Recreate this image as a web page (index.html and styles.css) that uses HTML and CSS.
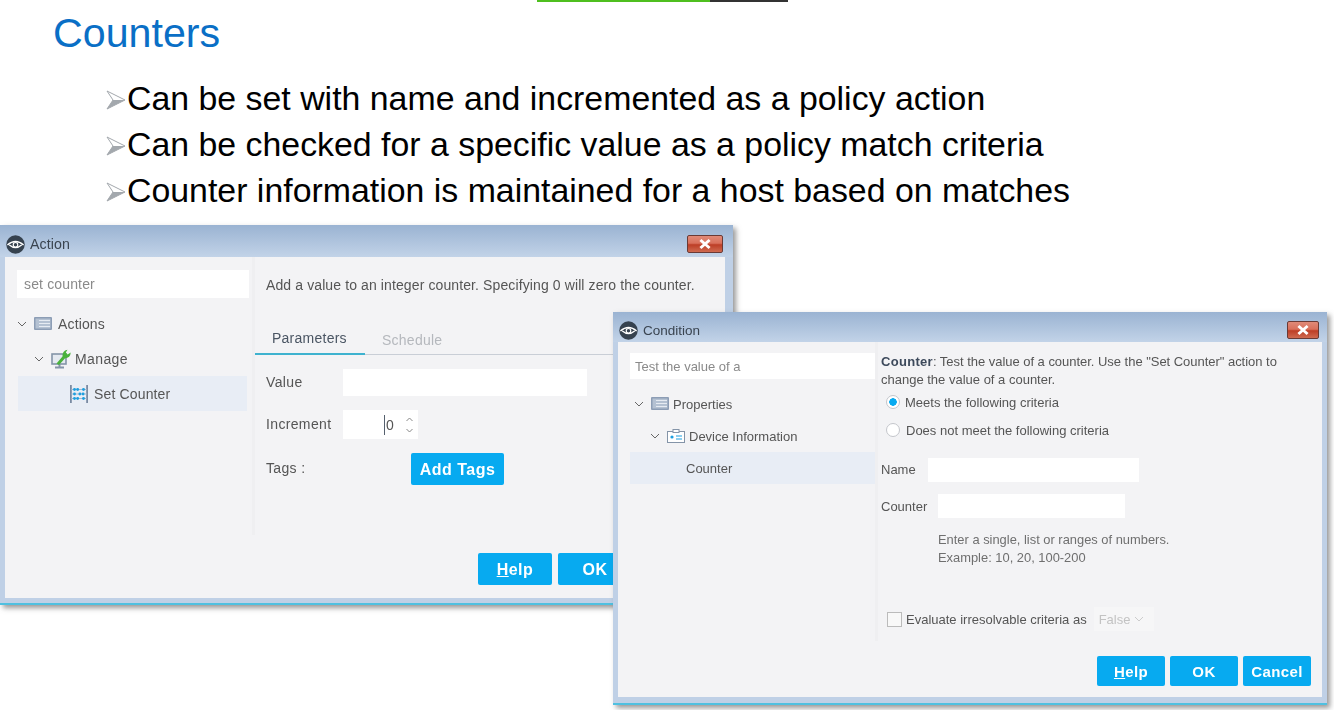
FILE: index.html
```html
<!DOCTYPE html>
<html lang="en">
<head>
<meta charset="utf-8">
<title>Counters</title>
<link rel="stylesheet" href="styles.css">
</head>
<body>
<div class="slide">
  <div class="topbar"><span class="topbar-green"></span><span class="topbar-dark"></span></div>
  <h1 class="title">Counters</h1>
  <ul class="bullets">
    <li class="bullet"><svg class="arrow" viewBox="0 0 20 20"><path d="M1 1 L19 10 L1 19 L7 10 Z" fill="#fff" stroke="#a3a8ad" stroke-width="1"/><path d="M7 10 L19 10 L1 19 Z" fill="#a3a8ad"/></svg><span>Can be set with name and incremented as a policy action</span></li>
    <li class="bullet"><svg class="arrow" viewBox="0 0 20 20"><path d="M1 1 L19 10 L1 19 L7 10 Z" fill="#fff" stroke="#a3a8ad" stroke-width="1"/><path d="M7 10 L19 10 L1 19 Z" fill="#a3a8ad"/></svg><span>Can be checked for a specific value as a policy match criteria</span></li>
    <li class="bullet"><svg class="arrow" viewBox="0 0 20 20"><path d="M1 1 L19 10 L1 19 L7 10 Z" fill="#fff" stroke="#a3a8ad" stroke-width="1"/><path d="M7 10 L19 10 L1 19 Z" fill="#a3a8ad"/></svg><span>Counter information is maintained for a host based on matches</span></li>
  </ul>

  <section class="window window-action">
    <header class="titlebar">
      <svg class="eye" viewBox="0 0 20 20"><circle cx="10" cy="10" r="9.7" fill="#36424f"/><path d="M1.5 10.5 Q10 3 18.5 10.5" fill="none" stroke="#fff" stroke-width="1.5"/><path d="M3.5 10.5 Q10 16 16.5 10.5" fill="none" stroke="#fff" stroke-width="1.3"/><circle cx="10" cy="10.3" r="2.4" fill="#36424f" stroke="#fff" stroke-width="1.2"/></svg>
      <span class="win-title">Action</span>
      <span class="close"><svg viewBox="0 0 14 10"><path d="M3 1.5 L11 8.5 M11 1.5 L3 8.5" stroke="#fff" stroke-width="2.6"/></svg></span>
    </header>
    <div class="body body-action">
      <div class="side">
        <div class="search">set counter</div>
        <div class="tree-row lvl0 first">
          <svg class="chev" viewBox="0 0 10 6"><path d="M1 1 L5 5 L9 1" fill="none" stroke="#666" stroke-width="1"/></svg>
          <svg class="ico" viewBox="0 0 18 14"><rect width="18" height="13" rx="1" fill="#8c9db5"/><rect x="1.5" y="1.5" width="15" height="10" fill="#b4c1d2"/><path d="M5 3.5H16M5 6.5H16M5 9.5H16" stroke="#e6ebf2" stroke-width="1"/></svg>
          <span>Actions</span>
        </div>
        <div class="tree-row lvl1">
          <svg class="chev" viewBox="0 0 10 6"><path d="M1 1 L5 5 L9 1" fill="none" stroke="#666" stroke-width="1"/></svg>
          <svg class="ico" viewBox="0 0 20 20"><rect x="1" y="5" width="14" height="10" fill="#e4e9f0" stroke="#8494a8" stroke-width="1.6"/><path d="M4 18.5H13M8.5 15V18" stroke="#8494a8" stroke-width="2"/><path d="M5.5 14.5 L11.5 7.5 Q11 2 16.5 0.8 L14.8 3.6 L16.6 5.6 L19.7 3.6 Q19.5 9 13.8 9.4 L8 16 Z" fill="#49b23c"/></svg>
          <span>Manage</span>
        </div>
        <div class="tree-row lvl2 selected">
          <svg class="ico" viewBox="0 0 20 20"><path d="M1 0V20M19 0V20" stroke="#7a8ba3" stroke-width="2"/><path d="M1 5H19M1 10H19M1 15H19" stroke="#9db0c8" stroke-width="1"/><g fill="#1d9fe0"><circle cx="5" cy="5" r="1.6"/><circle cx="8.5" cy="5" r="1.6"/><circle cx="15" cy="5" r="1.6"/><circle cx="11" cy="10" r="1.6"/><circle cx="14.5" cy="10" r="1.6"/><circle cx="5" cy="10" r="1.6"/><circle cx="5" cy="15" r="1.6"/><circle cx="8.5" cy="15" r="1.6"/><circle cx="15" cy="15" r="1.6"/></g></svg>
          <span>Set Counter</span>
        </div>
      </div>
      <div class="main">
        <p class="desc">Add a value to an integer counter. Specifying 0 will zero the counter.</p>
        <div class="tabs">
          <span class="tab tab-on">Parameters</span>
          <span class="tab tab-off">Schedule</span>
        </div>
        <div class="form">
          <label class="lbl">Value</label>
          <div class="input input-value"></div>
          <label class="lbl">Increment</label>
          <div class="input input-spin"><span class="spin-val">0</span><span class="spin"><svg viewBox="0 0 8 20"><path d="M1 6 L4 3 L7 6 M1 14 L4 17 L7 14" fill="none" stroke="#888" stroke-width="1"/></svg></span></div>
          <label class="lbl">Tags :</label>
          <div class="tag-cell"><button class="btn btn-tags">Add Tags</button></div>
        </div>
        <div class="actions actions-a">
          <button class="btn btn-foot"><u>H</u>elp</button>
          <button class="btn btn-foot">OK</button>
        </div>
      </div>
    </div>
  </section>

  <section class="window window-cond">
    <header class="titlebar">
      <svg class="eye" viewBox="0 0 20 20"><circle cx="10" cy="10" r="9.7" fill="#36424f"/><path d="M1.5 10.5 Q10 3 18.5 10.5" fill="none" stroke="#fff" stroke-width="1.5"/><path d="M3.5 10.5 Q10 16 16.5 10.5" fill="none" stroke="#fff" stroke-width="1.3"/><circle cx="10" cy="10.3" r="2.4" fill="#36424f" stroke="#fff" stroke-width="1.2"/></svg>
      <span class="win-title">Condition</span>
      <span class="close"><svg viewBox="0 0 14 10"><path d="M3 1.5 L11 8.5 M11 1.5 L3 8.5" stroke="#fff" stroke-width="2.6"/></svg></span>
    </header>
    <div class="body body-cond">
      <div class="cond-side">
        <div class="search search-c">Test the value of a</div>
        <div class="ctree-row c0">
          <svg class="chev" viewBox="0 0 10 6"><path d="M1 1 L5 5 L9 1" fill="none" stroke="#666" stroke-width="1"/></svg>
          <svg class="ico ico-c" viewBox="0 0 18 14"><rect width="18" height="13" rx="1" fill="#8c9db5"/><rect x="1.5" y="1.5" width="15" height="10" fill="#b4c1d2"/><path d="M5 3.5H16M5 6.5H16M5 9.5H16" stroke="#e6ebf2" stroke-width="1"/></svg>
          <span>Properties</span>
        </div>
        <div class="ctree-row c1">
          <svg class="chev" viewBox="0 0 10 6"><path d="M1 1 L5 5 L9 1" fill="none" stroke="#666" stroke-width="1"/></svg>
          <svg class="ico ico-c" viewBox="0 0 18 14"><rect x="0.5" y="2.5" width="17" height="11" fill="#fff" stroke="#8494a8"/><rect x="6" y="0.5" width="6" height="3" fill="#fff" stroke="#8494a8"/><circle cx="5" cy="8" r="1.6" fill="#1d9fe0"/><path d="M9 7H15M9 10H15" stroke="#1d9fe0" stroke-width="1.2"/></svg>
          <span>Device Information</span>
        </div>
        <div class="ctree-row c2 selected">Counter</div>
      </div>
      <div class="cond-main">
        <div class="cond-desc">
          <div><b>Counter</b><span>: Test the value of a counter. Use the "Set Counter" action to</span></div>
          <div>change the value of a counter.</div>
        </div>
        <div class="radio-row r1"><span class="radio radio-on"></span><span>Meets the following criteria</span></div>
        <div class="radio-row r2"><span class="radio"></span><span>Does not meet the following criteria</span></div>
        <div class="fld f-name"><label class="lbl">Name</label><div class="input input-name"></div></div>
        <div class="fld f-counter"><label class="lbl">Counter</label><div class="input input-counter"></div></div>
        <div class="hint"><div>Enter a single, list or ranges of numbers.</div><div>Example: 10, 20, 100-200</div></div>
        <div class="eval"><span class="check"></span><span>Evaluate irresolvable criteria as</span><span class="select">False<svg viewBox="0 0 10 6"><path d="M1 1 L5 5 L9 1" fill="none" stroke="#ccc" stroke-width="1"/></svg></span></div>
      </div>
      <div class="actions actions-c">
        <button class="btn btn-c"><u>H</u>elp</button>
        <button class="btn btn-c">OK</button>
        <button class="btn btn-c">Cancel</button>
      </div>
    </div>
  </section>
</div>
</body>
</html>
```
FILE: styles.css
```css
* { box-sizing: border-box; }
html, body { margin: 0; padding: 0; }
body { width: 1334px; height: 710px; overflow: hidden; background: #fff; font-family: "Liberation Sans", Arial, sans-serif; }
.slide { position: relative; width: 1334px; height: 710px; overflow: hidden; }

.topbar { display: flex; width: 251px; height: 2px; margin-left: 537px; }
.topbar-green { width: 173px; background: #4fbf1f; }
.topbar-dark { flex: 1; background: #333; }

.title { margin: 11px 0 0 53px; font-weight: 400; font-size: 41.2px; line-height: 40px; color: #0a6fc6; }
.bullets { list-style: none; margin: 22px 0 0 106px; padding: 0; }
.bullet { display: flex; align-items: center; height: 46px; font-size: 33.87px; color: #000; }
.arrow { width: 20px; height: 20px; margin-right: 1px; margin-top: 4px; flex: none; }

.window { position: absolute; background: #bfd0e6; box-shadow: 3px 3px 5px rgba(70,70,70,.55); border-bottom: 2px solid #4fc0e0; color: #555; font-size: 14px; filter: blur(.3px); }
.window-action { left: 0; top: 225px; width: 733px; height: 380px; padding: 0 8px 5px 5px; letter-spacing: .11px; }
.window-cond { left: 613px; top: 312px; width: 714px; height: 393px; padding: 0 5px 6px 5px; font-size: 13px; }

.titlebar { display: flex; align-items: center; height: 32px; margin: 0 -8px 0 -5px; padding: 6px 10px 0 6px; background: linear-gradient(#9ab3d2, #c2d3e8); color: #3a4450; }
.window-cond .titlebar { height: 30px; margin-right: -5px; padding: 6px 8px 0 6px; }
.eye { width: 19px; height: 19px; flex: none; }
.win-title { margin-left: 5px; font-size: 14.2px; flex: 1; }
.window-cond .win-title { font-size: 13.5px; letter-spacing: 0; }
.close { display: flex; align-items: center; justify-content: center; width: 36px; height: 18px; border: 1px solid #6a3a35; border-radius: 2px; background: linear-gradient(#e08a78 0%, #d9705b 45%, #bd3e26 55%, #cf6a50 100%); }
.window-cond .close { width: 32px; height: 18px; }
.close svg { width: 16px; height: 12px; }

.body { background: #f3f3f5; position: relative; }
.body-action { display: flex; height: 341px; }
.body-cond { display: grid; grid-template-columns: 257px 1fr; grid-template-rows: 1fr auto; height: 355px; }

.side { width: 247px; padding: 13px 0 0 12px; flex: none; letter-spacing: .15px; }
.search { background: #fff; height: 28px; width: 232px; padding-left: 7px; line-height: 28px; color: #8a8a8a; }
.tree-row { display: flex; align-items: center; height: 35px; }
.tree-row.first { margin-top: 8px; }
.lvl0 { padding-left: 0; }
.lvl1 { padding-left: 17px; }
.lvl1 span { letter-spacing: .4px; }
.lvl2 { padding-left: 52px; width: 229px; margin-left: 1px; }
.chev { width: 10px; height: 6px; flex: none; margin-right: 7px; }
.ico { width: 18px; height: 14px; flex: none; margin-right: 6px; }
.lvl1 .ico { width: 20px; height: 20px; margin-right: 4px; }
.lvl2 .ico { width: 18px; height: 18px; margin-right: 6px; }
.selected { background: #e8edf5; }

.main { flex: 1; border-left: 3px solid #efeff1; height: 278px; position: relative; }
.desc { margin: 0; padding: 20px 0 0 11px; line-height: 16px; }
.tabs { display: flex; margin-top: 27px; height: 35px; border-bottom: 1px solid #c9ced6; letter-spacing: .25px; }
.tab { display: block; line-height: 33px; }
.tab-on { width: 110px; padding: 2px 0 0 17px; color: #4a5563; border-bottom: 2px solid #3eb2cf; height: 35px; }
.tab-off { padding: 4px 0 0 17px; color: #b5b8bd; }
.form { display: grid; grid-template-columns: 77px 1fr; grid-template-rows: 27px 29px 32px; row-gap: 14px; padding: 14px 0 0 11px; align-items: center; }
.form .lbl { letter-spacing: .35px; margin-top: -2px; }
.input { background: #fff; }
.input-value { width: 244px; height: 27px; }
.input-spin { width: 75px; height: 29px; display: flex; justify-content: flex-end; align-items: center; }
.spin-val { margin-right: 11px; border-left: 1.5px solid #55606e; line-height: 20px; padding-left: 1px; }
.spin { width: 13px; height: 20px; margin-right: 0; }
.spin svg { width: 9px; height: 20px; display: block; }
.tag-cell { padding-left: 68px; }
.btn { border: 0; border-radius: 2px; background: #07aaf0; color: #fff; font-family: "Liberation Sans", Arial, sans-serif; font-weight: 700; font-size: 16px; letter-spacing: .5px; padding: 2px 0 0; }
.btn-tags { width: 93px; height: 32px; }
.actions { display: flex; }
.actions-a { position: absolute; left: 223px; top: 296px; gap: 6px; }
.btn-foot { width: 74px; height: 32px; }
.actions-c { grid-column: 1 / 3; justify-content: flex-end; gap: 5px; padding: 0 11px 11px 0; }
.btn-c { width: 68px; height: 30px; font-size: 15px; letter-spacing: .4px; padding: 0; }

.cond-side { padding: 11px 0 0 12px; border-right: 3px solid #efeff1; width: 260px; height: 299px; }
.search-c { width: 245px; height: 26px; line-height: 27px; padding-left: 5px; }
.ctree-row { display: flex; align-items: center; height: 32px; }
.c0 { margin-top: 9px; padding-left: 4px; }
.c1 { padding-left: 20px; }
.c2 { padding-left: 56px; width: 245px; }
.ico-c { margin-right: 4px; }
.cond-main { padding: 0 0 0 6px; position: relative; }
.cond-desc { margin: 11px 0 0; line-height: 18px; width: 420px; }
.cond-desc b { color: #3d4a5c; letter-spacing: .3px; }
.cond-desc span { letter-spacing: -.03px; }
.radio-row { display: flex; align-items: center; height: 18px; }
.r1 { margin-top: 4px; padding-left: 5px; }
.r2 { margin-top: 10px; padding-left: 5px; }
.radio { width: 14px; height: 14px; border-radius: 50%; border: 1.5px solid #c4c6cb; background: #fff; margin-right: 6px; flex: none; }
.radio-on { background: radial-gradient(circle, #07aaf0 0 3.5px, #fff 4px); margin-right: 5px; }
.fld { display: flex; align-items: center; }
.f-name { margin-top: 19px; height: 24px; }
.f-name .lbl { margin-top: -2px; }
.f-counter { margin-top: 12px; height: 24px; }
.lbl { color: #555; }
.f-name .lbl { width: 47px; }
.f-counter .lbl { width: 57px; }
.input-name { width: 211px; height: 24px; }
.input-counter { width: 187px; height: 24px; }
.hint { margin: 13px 0 0 57px; line-height: 18px; font-size: 12.9px; color: #6f6f6f; }
.eval { display: flex; align-items: center; margin: 40px 0 0 6px; }
.check { width: 15px; height: 15px; border: 1px solid #bbb; background: #f8f8f8; margin-right: 4px; }
.select { display: flex; align-items: center; gap: 4px; margin-left: 7px; padding: 0 5px; width: 60px; height: 24px; color: #c3c3c3; background: #f6f6f7; }
.select svg { width: 10px; height: 6px; }
```
